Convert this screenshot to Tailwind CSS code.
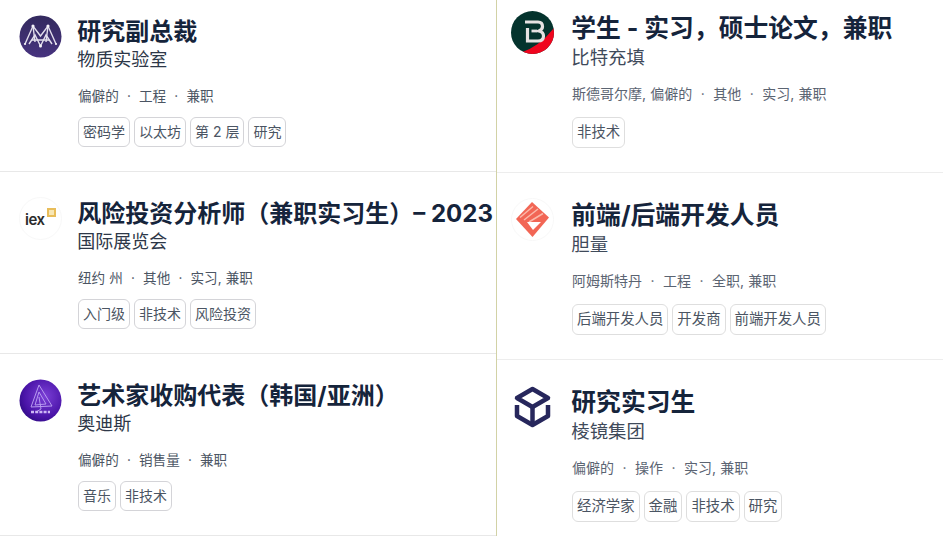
<!DOCTYPE html>
<html lang="zh">
<head>
<meta charset="utf-8">
<script src="https://cdn.jsdelivr.net/npm/@tailwindcss/browser@4"></script>
</head>
<body class="m-0 bg-white overflow-hidden">
<div class="flex h-[536px] w-[943px] overflow-hidden font-['Inter','Noto_Sans_CJK_SC',sans-serif]">
  <!-- left column -->
  <div class="w-[496px] shrink-0 -mt-[10px]">
    <article class="h-[182px] flex gap-4 pl-[19px] pt-[25px] border-b border-[#e8e8e8]">
      <svg class="w-[43px] h-[43px] shrink-0" viewBox="0 0 43 43"><defs><linearGradient id="g1" x1="0" y1="0" x2="0" y2="1"><stop offset="0" stop-color="#332a5e"/><stop offset="1" stop-color="#47337f"/></linearGradient></defs><circle cx="21.5" cy="21.5" r="21" fill="url(#g1)"/><g fill="none" stroke="#e2deec" stroke-width="1.4"><path d="M6 29 14 11 21.5 21 29 11 37 29"/><path d="M10 29 16 20 21.500 31 27 20 33 29"/><path d="M14 11 16 27M29 11 27 27M13 25H30"/></g><g fill="#f5f3f8"><circle cx="14" cy="11" r="1.6"/><circle cx="29" cy="11" r="1.6"/><circle cx="21.5" cy="31" r="1.5"/><circle cx="6" cy="29" r="1.1"/><circle cx="37" cy="29" r="1.1"/></g></svg>
      <div>
        <h2 class="mt-px -ml-[0.7px] text-[24px] leading-[32px] font-bold text-[#15243b]">研究副总裁</h2>
        <p class="-ml-[0.7px] text-[18px] leading-[24px] text-[#2d3748]">物质实验室</p>
        <p class="mt-[14px] text-[13.6px] leading-[20px] text-[#4b5563] [word-spacing:0.25px]">偏僻的 &nbsp;·&nbsp; 工程 &nbsp;·&nbsp; 兼职</p>
        <ul class="mt-[11px] flex gap-1 text-[14px] leading-[20px] text-[#4b5563]">
          <li class="px-1 py-[4px] border border-[#d4d4d8] rounded-md">密码学</li>
          <li class="px-1 py-[4px] border border-[#d4d4d8] rounded-md">以太坊</li>
          <li class="px-1 py-[4px] border border-[#d4d4d8] rounded-md">第 2 层</li>
          <li class="px-1 py-[4px] border border-[#d4d4d8] rounded-md">研究</li>
        </ul>
      </div>
    </article>
    <article class="h-[182px] flex gap-4 pl-[19px] pt-[25px] border-b border-[#e8e8e8]">
      <div class="relative w-[43px] h-[43px] shrink-0 rounded-full border border-[#f8f8f8]">
        <span class="absolute left-[5px] top-[12px] text-[15px] leading-[20px] font-semibold tracking-[-0.5px] text-[#2b2b2b]">iex</span>
        <span class="absolute left-[27px] top-[10px] w-[9px] h-[9px] border-2 border-[#e8bd5a] bg-[#f8e7b5]"></span>
      </div>
      <div class="min-w-0">
        <h2 class="mt-px -ml-[0.7px] text-[24px] leading-[32px] font-bold text-[#15243b] whitespace-nowrap">风险投资分析师（兼职实习生）– 2023</h2>
        <p class="-ml-[0.7px] text-[18px] leading-[24px] text-[#2d3748]">国际展览会</p>
        <p class="mt-[14px] text-[13.6px] leading-[20px] text-[#4b5563] [word-spacing:0.25px]">纽约 州 &nbsp;·&nbsp; 其他 &nbsp;·&nbsp; 实习, 兼职</p>
        <ul class="mt-[11px] flex gap-1 text-[14px] leading-[20px] text-[#4b5563]">
          <li class="px-1 py-[4px] border border-[#d4d4d8] rounded-md">入门级</li>
          <li class="px-1 py-[4px] border border-[#d4d4d8] rounded-md">非技术</li>
          <li class="px-1 py-[4px] border border-[#d4d4d8] rounded-md">风险投资</li>
        </ul>
      </div>
    </article>
    <article class="h-[182px] flex gap-4 pl-[19px] pt-[25px] border-b border-[#e8e8e8]">
      <svg class="w-[43px] h-[43px] shrink-0" viewBox="0 0 43 43"><defs><radialGradient id="g3" cx="0.6" cy="0.4" r="0.7"><stop offset="0" stop-color="#7b3fd6"/><stop offset="0.7" stop-color="#4a14a8"/><stop offset="1" stop-color="#2c0a80"/></radialGradient></defs><circle cx="21.5" cy="21.5" r="21" fill="url(#g3)"/><g fill="none" stroke="#b79af0" stroke-width="1"><path d="M20 6 33 27 12 28Z"/><path d="M20 13 27 25 16 26Z"/><path d="M20 18 22 30 17 33"/></g><path d="M12 33H31" stroke="#cdb8f5" stroke-width="2.4" stroke-dasharray="3 1.2"/></svg>
      <div>
        <h2 class="mt-px -ml-[0.7px] text-[24px] leading-[32px] font-bold text-[#15243b] whitespace-nowrap">艺术家收购代表（韩国/亚洲）</h2>
        <p class="-ml-[0.7px] text-[18px] leading-[24px] text-[#2d3748]">奥迪斯</p>
        <p class="mt-[14px] text-[13.6px] leading-[20px] text-[#4b5563] [word-spacing:0.25px]">偏僻的 &nbsp;·&nbsp; 销售量 &nbsp;·&nbsp; 兼职</p>
        <ul class="mt-[11px] flex gap-1 text-[14px] leading-[20px] text-[#4b5563]">
          <li class="px-1 py-[4px] border border-[#d4d4d8] rounded-md">音乐</li>
          <li class="px-1 py-[4px] border border-[#d4d4d8] rounded-md">非技术</li>
        </ul>
      </div>
    </article>
  </div>
  <!-- right column -->
  <div class="flex-1 -mt-[14px] border-l border-[#d2d2a6]">
    <article class="h-[187px] flex gap-[18px] pl-[14px] pt-[25px] border-b border-[#ededed]">
      <svg class="w-[43px] h-[43px] shrink-0" viewBox="0 0 43 43"><defs><clipPath id="c4"><circle cx="21.5" cy="21.5" r="21.5"/></clipPath></defs><g clip-path="url(#c4)"><rect width="43" height="43" fill="#04332d"/><path d="M9 42Q28 36 43 17V43H9Z" fill="#f0051e"/></g><path d="M14 11H27Q31.500 11 31.500 15.500Q31.500 18.500 28 20Q32.500 21 32.500 25Q32.500 30 27 30H16.500V17" fill="none" stroke="#e6e2e2" stroke-width="3.200"/><path d="M20.500 20H26" stroke="#e6e2e2" stroke-width="2.800"/></svg>
      <div>
        <h2 class="mt-px -ml-[0.7px] text-[24.8px] leading-[33px] font-bold text-[#15243b] whitespace-nowrap">学生 - 实习，硕士论文，兼职</h2>
        <p class="-ml-[0.7px] text-[18.4px] leading-[24px] text-[#3f4a5a]">比特充填</p>
        <p class="mt-[15px] text-[14px] leading-[20px] text-[#5b6472] whitespace-nowrap [word-spacing:0.3px]">斯德哥尔摩, 偏僻的 &nbsp;·&nbsp; 其他 &nbsp;·&nbsp; 实习, 兼职</p>
        <ul class="mt-[13px] flex gap-1 text-[14.4px] leading-[20px] text-[#4b5563]">
          <li class="px-1 pt-[4px] pb-[5px] border border-[#dedede] rounded-md">非技术</li>
        </ul>
      </div>
    </article>
    <article class="h-[187px] flex gap-[18px] pl-[14px] pt-[25px] border-b border-[#ededed]">
      <svg class="w-[43px] h-[43px] shrink-0" viewBox="0 0 43 43"><circle cx="21.500" cy="21.500" r="21" fill="#fff" stroke="#f8f8f8"/><path d="M21 4 38 19.500 21.500 39 5 21Z" fill="#f26655"/><path d="M9 19.500 22 8.500M13 22 27 11M18 24 32 15.500" stroke="#fbb9aa" stroke-width="1.500"/><path d="M16 24H30L22 32Z" fill="#fff"/></svg>
      <div>
        <h2 class="mt-px -ml-[0.7px] text-[24.8px] leading-[33px] font-bold text-[#15243b] whitespace-nowrap">前端/后端开发人员</h2>
        <p class="-ml-[0.7px] text-[18.4px] leading-[24px] text-[#3f4a5a]">胆量</p>
        <p class="mt-[15px] text-[14px] leading-[20px] text-[#5b6472] [word-spacing:0.3px]">阿姆斯特丹 &nbsp;·&nbsp; 工程 &nbsp;·&nbsp; 全职, 兼职</p>
        <ul class="mt-[13px] flex gap-1 text-[14.4px] leading-[20px] text-[#4b5563]">
          <li class="px-1 pt-[4px] pb-[5px] border border-[#dedede] rounded-md">后端开发人员</li>
          <li class="px-1 pt-[4px] pb-[5px] border border-[#dedede] rounded-md">开发商</li>
          <li class="px-1 pt-[4px] pb-[5px] border border-[#dedede] rounded-md">前端开发人员</li>
        </ul>
      </div>
    </article>
    <article class="h-[187px] flex gap-[18px] pl-[14px] pt-[25px]">
      <svg class="w-[43px] h-[43px] shrink-0" viewBox="0 0 43 43"><g fill="none" stroke="#27275c" stroke-width="4.500" stroke-linejoin="round"><path d="M21.500 4 37 13 21.500 22 6 13Z"/><path d="M6 20V31L21.500 40 37 31V20"/><path d="M21.500 22V40"/></g></svg>
      <div>
        <h2 class="mt-px -ml-[0.7px] text-[24.8px] leading-[33px] font-bold text-[#15243b]">研究实习生</h2>
        <p class="-ml-[0.7px] text-[18.4px] leading-[24px] text-[#3f4a5a]">棱镜集团</p>
        <p class="mt-[15px] text-[14px] leading-[20px] text-[#5b6472] [word-spacing:0.3px]">偏僻的 &nbsp;·&nbsp; 操作 &nbsp;·&nbsp; 实习, 兼职</p>
        <ul class="mt-[13px] flex gap-1 text-[14.4px] leading-[20px] text-[#4b5563]">
          <li class="px-1 pt-[4px] pb-[5px] border border-[#dedede] rounded-md">经济学家</li>
          <li class="px-1 pt-[4px] pb-[5px] border border-[#dedede] rounded-md">金融</li>
          <li class="px-1 pt-[4px] pb-[5px] border border-[#dedede] rounded-md">非技术</li>
          <li class="px-1 pt-[4px] pb-[5px] border border-[#dedede] rounded-md">研究</li>
        </ul>
      </div>
    </article>
  </div>
</div>
</body>
</html>
